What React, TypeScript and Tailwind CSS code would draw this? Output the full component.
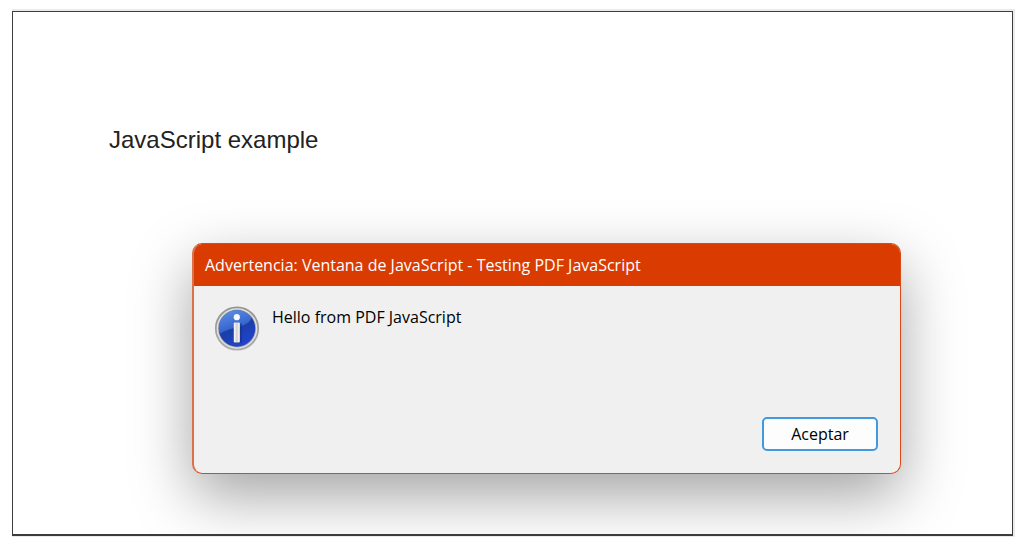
function InfoIcon() {
  return (
    <svg viewBox="0 0 46 46" className="size-[46px] shrink-0" aria-hidden="true">
      <defs>
        <linearGradient id="ring" x1="0" y1="0" x2="0" y2="1">
          <stop offset="0" stopColor="#949494" />
          <stop offset="1" stopColor="#adadad" />
        </linearGradient>
        <linearGradient id="disc" x1="0.2" y1="0" x2="0.75" y2="1">
          <stop offset="0" stopColor="#2a5cc4" />
          <stop offset="0.5" stopColor="#1a3ea8" />
          <stop offset="1" stopColor="#2444d4" />
        </linearGradient>
        <linearGradient id="gloss" x1="0" y1="0" x2="0.5" y2="1">
          <stop offset="0" stopColor="#5f93ea" />
          <stop offset="1" stopColor="#2b57c4" />
        </linearGradient>
        <linearGradient id="stem" x1="0" y1="0" x2="1" y2="0">
          <stop offset="0" stopColor="#ffffff" />
          <stop offset="0.5" stopColor="#d0d0d0" />
          <stop offset="1" stopColor="#ffffff" />
        </linearGradient>
      </defs>
      <circle cx="23" cy="22.5" r="21.2" fill="#e2e2e0" stroke="url(#ring)" strokeWidth="1.8" />
      <circle cx="23" cy="22.5" r="19" fill="#a3a5ac" />
      <circle cx="23" cy="22.5" r="18.2" fill="url(#disc)" />
      <path d="M5 24.5A18 18 0 0 1 37.5 11.800C36 17 31 19 24 21C16 23 9 25 5.300 28Z" fill="url(#gloss)" />
      <path d="M25.500 17.500h2.500v19.500h-5v-1.500h2.500z" fill="#152f86" opacity="0.6" />
      <circle cx="22.800" cy="11.200" r="3.100" fill="#f5f8ff" />
      <rect x="19.800" y="16.500" width="6" height="20" rx="1" fill="url(#stem)" />
    </svg>
  );
}

export default function App() {
  return (
    <main className="flex min-h-screen flex-col bg-white pt-[9px] pr-[9px] pb-2 pl-3 text-black">
      <div className="flex grow flex-col border-t-2 border-r-2 border-b border-[#ebebeb]">
        <section className="flex grow flex-col overflow-hidden border border-b-2 border-[#3c3c3c] bg-white pb-[60px]">
          <h1 className="mt-28 ml-24 font-['Liberation_Sans',sans-serif] text-2xl leading-8 text-[#222]">
            JavaScript example
          </h1>
          <div
            role="dialog"
            aria-labelledby="dialog-title"
            aria-describedby="dialog-message"
            className="mt-[87px] mr-[111px] ml-[179px] flex grow flex-col overflow-hidden rounded-[10px] border border-l-2 border-[#da4a17] border-l-[#dd7048] bg-[#f0f0f0] font-['Open_Sans','Noto_Sans',sans-serif] text-base leading-6 shadow-[0_22px_60px_rgba(0,0,0,0.36)]"
          >
            <header className="bg-[#da3b01] px-[11px] py-[9px] text-white">
              <h2 id="dialog-title">Advertencia: Ventana de JavaScript - Testing PDF JavaScript</h2>
            </header>
            <div className="flex gap-3 px-5 pt-5">
              <InfoIcon />
              <p id="dialog-message" className="leading-[22px]">
                Hello from PDF JavaScript
              </p>
            </div>
            <footer className="mt-auto flex justify-end px-[22px] pb-[22px]">
              <button
                type="button"
                className="h-[34px] w-[116px] rounded-[5px] border-2 border-[#3f9ae0] bg-[#fdfdfd]"
              >
                Aceptar
              </button>
            </footer>
          </div>
        </section>
      </div>
    </main>
  );
}
